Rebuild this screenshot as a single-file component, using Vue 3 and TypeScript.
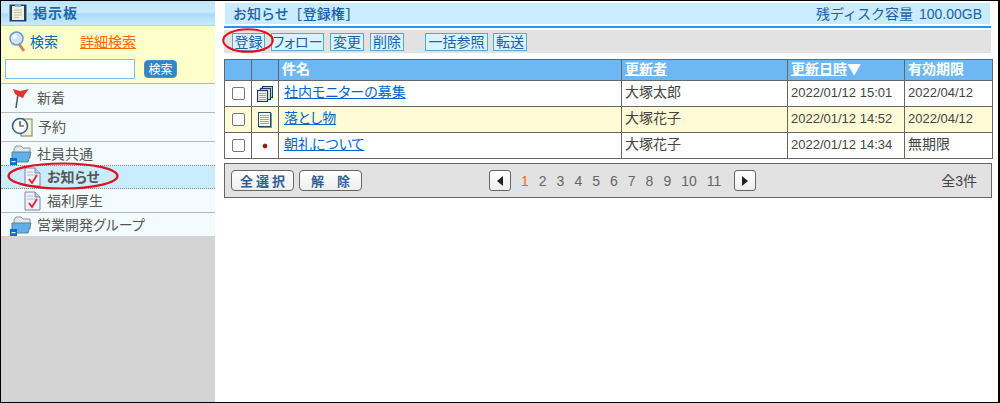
<script setup lang="ts">
interface Row { title: string; user: string; date: string; limit: string; icon: string; alt: boolean }
const rows: Row[] = [
  { title: '社内モニターの募集', user: '大塚太郎', date: '2022/01/12 15:01', limit: '2022/04/12', icon: 'multi', alt: false },
  { title: '落とし物', user: '大塚花子', date: '2022/01/12 14:52', limit: '2022/04/12', icon: 'doc', alt: true },
  { title: '朝礼について', user: '大塚花子', date: '2022/01/12 14:34', limit: '無期限', icon: 'dot', alt: false },
]
const pages = ['2', '3', '4', '5', '6', '7', '8', '9', '10', '11']
</script>

<template>
  <div class="frame">
    <aside class="side">
      <div class="side-head">
        <svg class="board-ico" width="20" height="20" viewBox="0 0 20 20">
          <rect x="0.500" y="0.500" width="19" height="19" fill="#d8ecf6" />
          <rect x="1.500" y="1.500" width="17" height="17" fill="#1f3f5f" />
          <rect x="4" y="3" width="12" height="14" fill="#f0efdc" />
          <rect x="7" y="1.500" width="6" height="2.500" fill="#8fb4cc" />
          <path d="M6 7h8M6 9.500h8M6 12h8M6 14.500h5" stroke="#bfc4b0" stroke-width="1" />
        </svg>
        <span>掲示板</span>
      </div>
      <div class="search">
        <div class="search-top">
          <svg class="lens" width="17" height="21" viewBox="0 0 17 21">
            <line x1="10" y1="13" x2="15" y2="20" stroke="#c98a4a" stroke-width="3" />
            <circle cx="7.500" cy="7.500" r="6.500" fill="#cfe4fb" stroke="#6b9ad2" stroke-width="1.500" />
            <circle cx="5.500" cy="5.500" r="2.200" fill="#fff" />
          </svg>
          <a class="s-link">検索</a>
          <a class="s-detail">詳細検索</a>
        </div>
        <div class="search-bottom">
          <input class="s-input" type="text" />
          <button class="s-btn">検索</button>
        </div>
      </div>
      <div class="nav-row r-new">
        <svg width="18" height="22" viewBox="0 0 18 22">
          <path d="M6 7L4 21" stroke="#555" stroke-width="1.500" />
          <path d="M1 2L8 4L17 2L13 7L11 11L6 9L3 7Z" fill="#e2342c" />
        </svg>
        <span>新着</span>
      </div>
      <div class="nav-row r-res">
        <svg width="22" height="22" viewBox="0 0 22 22">
          <rect x="10" y="3" width="11" height="17" fill="#f4f1da" stroke="#8a7a3a" />
          <circle cx="9" cy="10" r="7.500" fill="#fff" stroke="#2b5c93" stroke-width="1.500" />
          <path d="M9 5v5h4" fill="none" stroke="#333" stroke-width="1.200" />
        </svg>
        <span>予約</span>
      </div>
      <div class="nav-row r-group">
        <svg width="22" height="22" viewBox="0 0 22 22">
          <path d="M4 6L6 3H11L13 5H20V15H4Z" fill="#e3e6e8" stroke="#8c9398" />
          <path d="M2 9H21L18 19H2Z" fill="#62aee6" stroke="#5d7f9a" />
          <rect x="0" y="15" width="7" height="7" fill="#0071c1" />
          <rect x="1.500" y="18" width="4" height="1.200" fill="#fff" />
        </svg>
        <span>社員共通</span>
      </div>
      <div class="sub-row selected">
        <svg class="check" width="17" height="20" viewBox="0 0 17 20">
          <path d="M1 1H11L16 6V19H1Z" fill="#eef0fa" stroke="#7d84a8" />
          <path d="M11 1V6H16" fill="#c9cde6" stroke="#7d84a8" />
          <path d="M3 5h6M3 8h10" stroke="#b8bcd8" />
          <path d="M5 12L8 16L13 8" fill="none" stroke="#e0202a" stroke-width="1.800" />
        </svg>
        <b>お知らせ</b>
      </div>
      <div class="sub-row plain">
        <svg class="check" width="17" height="20" viewBox="0 0 17 20">
          <path d="M1 1H11L16 6V19H1Z" fill="#eef0fa" stroke="#7d84a8" />
          <path d="M11 1V6H16" fill="#c9cde6" stroke="#7d84a8" />
          <path d="M3 5h6M3 8h10" stroke="#b8bcd8" />
          <path d="M5 12L8 16L13 8" fill="none" stroke="#e0202a" stroke-width="1.800" />
        </svg>
        <span>福利厚生</span>
      </div>
      <div class="nav-row r-group2">
        <svg width="22" height="22" viewBox="0 0 22 22">
          <path d="M4 6L6 3H11L13 5H20V15H4Z" fill="#e3e6e8" stroke="#8c9398" />
          <path d="M2 9H21L18 19H2Z" fill="#62aee6" stroke="#5d7f9a" />
          <rect x="0" y="15" width="7" height="7" fill="#0071c1" />
          <rect x="1.500" y="18" width="4" height="1.200" fill="#fff" />
        </svg>
        <span>営業開発グループ</span>
      </div>
      <svg class="ring ring-side" width="112" height="28" viewBox="0 0 112 28">
        <ellipse cx="56" cy="14" rx="54.500" ry="12.500" fill="none" stroke="#e0101c" stroke-width="2.200" />
      </svg>
    </aside>

    <main class="main">
      <div class="title-bar">
        <span class="t-left">お知らせ [登録権]</span>
        <span class="t-right">残ディスク容量 100.00GB</span>
      </div>
      <div class="toolbar">
        <button class="tb w33">登録</button>
        <button class="tb w53">フォロー</button>
        <button class="tb w34">変更</button>
        <button class="tb w34">削除</button>
        <button class="tb w63 tb-gap">一括参照</button>
        <button class="tb w34 tb-last">転送</button>
        <svg class="ring ring-tool" width="52" height="25" viewBox="0 0 52 25">
          <ellipse cx="26" cy="12.500" rx="24.800" ry="11.300" fill="none" stroke="#e0101c" stroke-width="2" />
        </svg>
      </div>
      <table class="list">
        <colgroup>
          <col class="c1" /><col class="c2" /><col class="c3" /><col class="c4" /><col class="c5" /><col class="c6" />
        </colgroup>
        <thead>
          <tr>
            <th></th>
            <th></th>
            <th>件名</th>
            <th><a>更新者</a></th>
            <th><a>更新日時</a><span class="sort">▼</span></th>
            <th>有効期限</th>
          </tr>
        </thead>
        <tbody>
          <tr v-for="r in rows" :key="r.title" :class="{ alt: r.alt }">
            <td class="ctr"><span class="cb"></span></td>
            <td class="ctr">
              <svg v-if="r.icon === 'multi'" width="16" height="16" viewBox="0 0 16 16">
                <rect x="5.500" y="0.500" width="10" height="11" fill="#f0eed8" stroke="#12405e" stroke-width="1.200" />
                <rect x="3.500" y="2.500" width="10" height="11" fill="#f0eed8" stroke="#12405e" stroke-width="1.200" />
                <rect x="0.500" y="4.500" width="10" height="11" fill="#f5f3e2" stroke="#12405e" stroke-width="1.200" />
                <path d="M2 7.500h7M2 9.500h7M2 11.500h7M2 13.500h7" stroke="#a8a88e" />
              </svg>
              <svg v-else-if="r.icon === 'doc'" width="14" height="16" viewBox="0 0 14 16">
                <rect x="0.500" y="0.500" width="12" height="14" fill="#f6f6ea" stroke="#1f4a68" />
                <path d="M1 15.500h13M13.500 1v15" stroke="#7d96a8" />
                <path d="M2 3.500h9M2 5.500h9M2 7.500h9M2 9.500h9M2 11.500h9" stroke="#a8a88e" />
              </svg>
              <svg v-else width="6" height="6" viewBox="0 0 6 6">
                <circle cx="3" cy="3" r="2" fill="#cc0000" stroke="#222" stroke-width="0.700" />
              </svg>
            </td>
            <td class="sub-cell"><a class="subject">{{ r.title }}</a></td>
            <td>{{ r.user }}</td>
            <td class="small">{{ r.date }}</td>
            <td :class="{ small: r.limit !== '無期限' }">{{ r.limit }}</td>
          </tr>
        </tbody>
      </table>
      <div class="foot">
        <div class="foot-left">
          <button class="gb">全 選 択</button>
          <button class="gb">解　除</button>
        </div>
        <div class="pager">
          <button class="arrow"><i class="tri-l"></i></button>
          <div class="nums">
            <span class="cur">1</span>
            <span v-for="p in pages" :key="p">{{ p }}</span>
          </div>
          <button class="arrow"><i class="tri-r"></i></button>
        </div>
        <div class="count">全3件</div>
      </div>
    </main>
  </div>
</template>

<style>
html, body { margin: 0; padding: 0; background: #fff; }
</style>

<style scoped>
.frame {
  box-sizing: border-box;
  width: 1000px;
  height: 403px;
  display: flex;
  border: 1px solid #000;
  border-right-width: 2px;
  font-family: "Liberation Sans", "Noto Sans CJK JP", sans-serif;
  font-feature-settings: "palt";
  font-size: 14px;
  color: #444;
  background: #fff;
  overflow: hidden;
}
.side {
  position: relative;
  width: 214px;
  flex: none;
  background: #d4d4d4;
}
.side-head {
  height: 25px;
  display: flex;
  align-items: center;
  gap: 5px;
  padding-left: 7px;
  box-sizing: border-box;
  background: linear-gradient(#bfe6fb, #c9ebfd 45%, #a8dcf8 55%, #c9ebfd);
  border-bottom: 1px solid #a5dcf8;
  color: #1c6aa8;
  font-weight: 700;
  font-size: 14px;
  letter-spacing: 1px;
}
.side-head span, .nav-row span, .sub-row span, .sub-row b, .s-link, .s-detail { position: relative; top: -1px; }
.search {
  height: 58px;
  box-sizing: border-box;
  background: #ffffcc;
  border-bottom: 1px solid #b8b8b8;
  padding: 5px 0 0 4px;
}
.search-top {
  display: flex;
  align-items: center;
  height: 21px;
  padding-left: 4px;
}
.lens { margin-right: 4px; }
.s-link { color: #0068a8; width: 50px; }
.s-detail { color: #ff6600; text-decoration: underline; }
.search-bottom {
  display: flex;
  align-items: center;
  gap: 9px;
  margin-top: 7px;
}
.s-input {
  box-sizing: border-box;
  width: 130px;
  height: 20px;
  border: 1px solid #70c4f4;
  background: #fff;
  padding: 0;
}
.s-btn {
  width: 33px;
  height: 18px;
  padding: 0;
  border: 1px solid #4a90c8;
  border-radius: 4px;
  background: #2f86cc;
  color: #fff;
  font: 12px "Noto Sans CJK JP", sans-serif;
  line-height: 16px;
}
.nav-row {
  display: flex;
  align-items: center;
  box-sizing: border-box;
  background: #f3fbff;
  border-bottom: 1px solid #b8b8b8;
  color: #555;
}
.nav-row svg { flex: none; }
.r-new { height: 29px; padding-left: 11px; gap: 7px; }
.r-res { height: 29px; padding-left: 10px; gap: 5px; }
.r-group { height: 23px; padding-left: 9px; gap: 5px; border-bottom: 0; }
.r-group2 {
  height: 24px;
  padding-left: 9px;
  gap: 5px;
  border-top: 1px solid #b8b8b8;
  border-bottom: 0;
}
.sub-row {
  display: flex;
  align-items: center;
  gap: 6px;
  height: 23px;
  padding-left: 23px;
  box-sizing: border-box;
  color: #555;
}
.selected {
  background: #c9ecff;
  border-top: 1px dotted #888;
  border-bottom: 1px dotted #888;
  height: 24px;
}
.plain { background: #f3fbff; height: 23px; }
.ring { position: absolute; pointer-events: none; }
.ring-side { left: 6px; top: 161px; }
.main {
  flex: 1;
  padding: 2px 7px 0 9px;
  min-width: 0;
}
.title-bar {
  display: flex;
  justify-content: space-between;
  align-items: center;
  height: 21px;
  margin-left: 1px;
  margin-right: 1px;
  padding: 0 8px;
  background: #c9ecff;
  color: #1c5fa8;
  font-size: 14px;
}
.title-bar span { position: relative; top: -1px; }
.t-left { font-family: "Noto Sans CJK JP", sans-serif; font-weight: 500; font-feature-settings: "hwid"; }
.t-right { font-feature-settings: normal; word-spacing: 2px; }
.title-bar + .toolbar { margin-top: 2px; border-top: 2px solid #2b90f0; }
.toolbar {
  position: relative;
  display: flex;
  align-items: flex-start;
  gap: 6px;
  height: 20px;
  background: linear-gradient(#fff 0, #fff 2px, #e2e2e2 2px);
  padding-left: 8px;
  padding-top: 5px;
}
.tb {
  height: 18px;
  padding: 0 0 2px;
  border: 1px solid #5aa7c8;
  background: #d8f4ff;
  color: #1c5fa8;
  font: 14px/14px "Noto Sans CJK JP", sans-serif;
  font-feature-settings: "palt";
  white-space: nowrap;
}
.w33 { width: 33px; }
.w34 { width: 34px; }
.w53 { width: 53px; }
.w63 { width: 63px; }
.tb-gap { margin-left: 15px; }
.tb-last { margin-left: -1px; }
.ring-tool { left: -2px; top: 0; }
.list {
  margin-top: 6px;
  width: 768px;
  table-layout: fixed;
  border-collapse: collapse;
}
.c1, .c2 { width: 27px; }
.c3 { width: 343px; }
.c4 { width: 166px; }
.c5 { width: 117px; }
.c6 { width: 88px; }
.list th, .list td {
  border: 1px solid #666;
  padding: 0 0 2px 3px;
  text-align: left;
  overflow: hidden;
  white-space: nowrap;
}
.list th {
  height: 18px;
  background: #6db8f2;
  color: #fff;
  font-weight: 700;
  font-size: 14px;
  line-height: 18px;
}
.list th a { text-decoration: underline; }
.sort { font-family: "Noto Sans CJK JP", sans-serif; font-weight: 400; line-height: 1; }
.list td { height: 23px; line-height: 23px; background: #fff; color: #444; }
.list .alt td { background: #fffbd6; }
.list td.ctr { padding: 0; height: 25px; text-align: center; line-height: 0; vertical-align: middle; }
.list td.sub-cell { padding-left: 5px; }
.subject { color: #0066cc; text-decoration: underline; }
.list td.small { font-size: 13px; }
.cb {
  display: inline-block;
  box-sizing: border-box;
  width: 13px;
  height: 13px;
  border: 1px solid #767676;
  border-radius: 2px;
  background: #fff;
}
.foot {
  margin-top: 4px;
  width: 768px;
  height: 35px;
  box-sizing: border-box;
  border: 1px solid #666;
  background: #e2e2e2;
  display: flex;
  align-items: center;
  padding: 0 6px;
}
.foot-left { display: flex; gap: 5px; width: 258px; }
.gb {
  width: 63px;
  height: 21px;
  padding: 0;
  border: 1px solid #666;
  border-radius: 4px;
  background: linear-gradient(#fff, #eee);
  color: #2f5f95;
  font: 700 13px/17px "Noto Sans CJK JP", sans-serif;
}
.pager { display: flex; align-items: center; flex: 1; }
.arrow {
  width: 22px;
  height: 21px;
  padding: 0;
  border: 1px solid #666;
  border-radius: 3px;
  background: linear-gradient(#fff, #eee);
  display: flex;
  align-items: center;
  justify-content: center;
}
.tri-l { border: 5px solid transparent; border-left: 0; border-right: 6px solid #222; }
.tri-r { border: 5px solid transparent; border-right: 0; border-left: 6px solid #222; }
.nums {
  display: flex;
  gap: 10px;
  margin: 0 13px 0 10px;
  font: 14px "Liberation Sans", sans-serif;
  color: #666;
}
.cur { color: #ff6600; }
.count { color: #444; margin-right: 8px; position: relative; top: -1px; }
</style>
